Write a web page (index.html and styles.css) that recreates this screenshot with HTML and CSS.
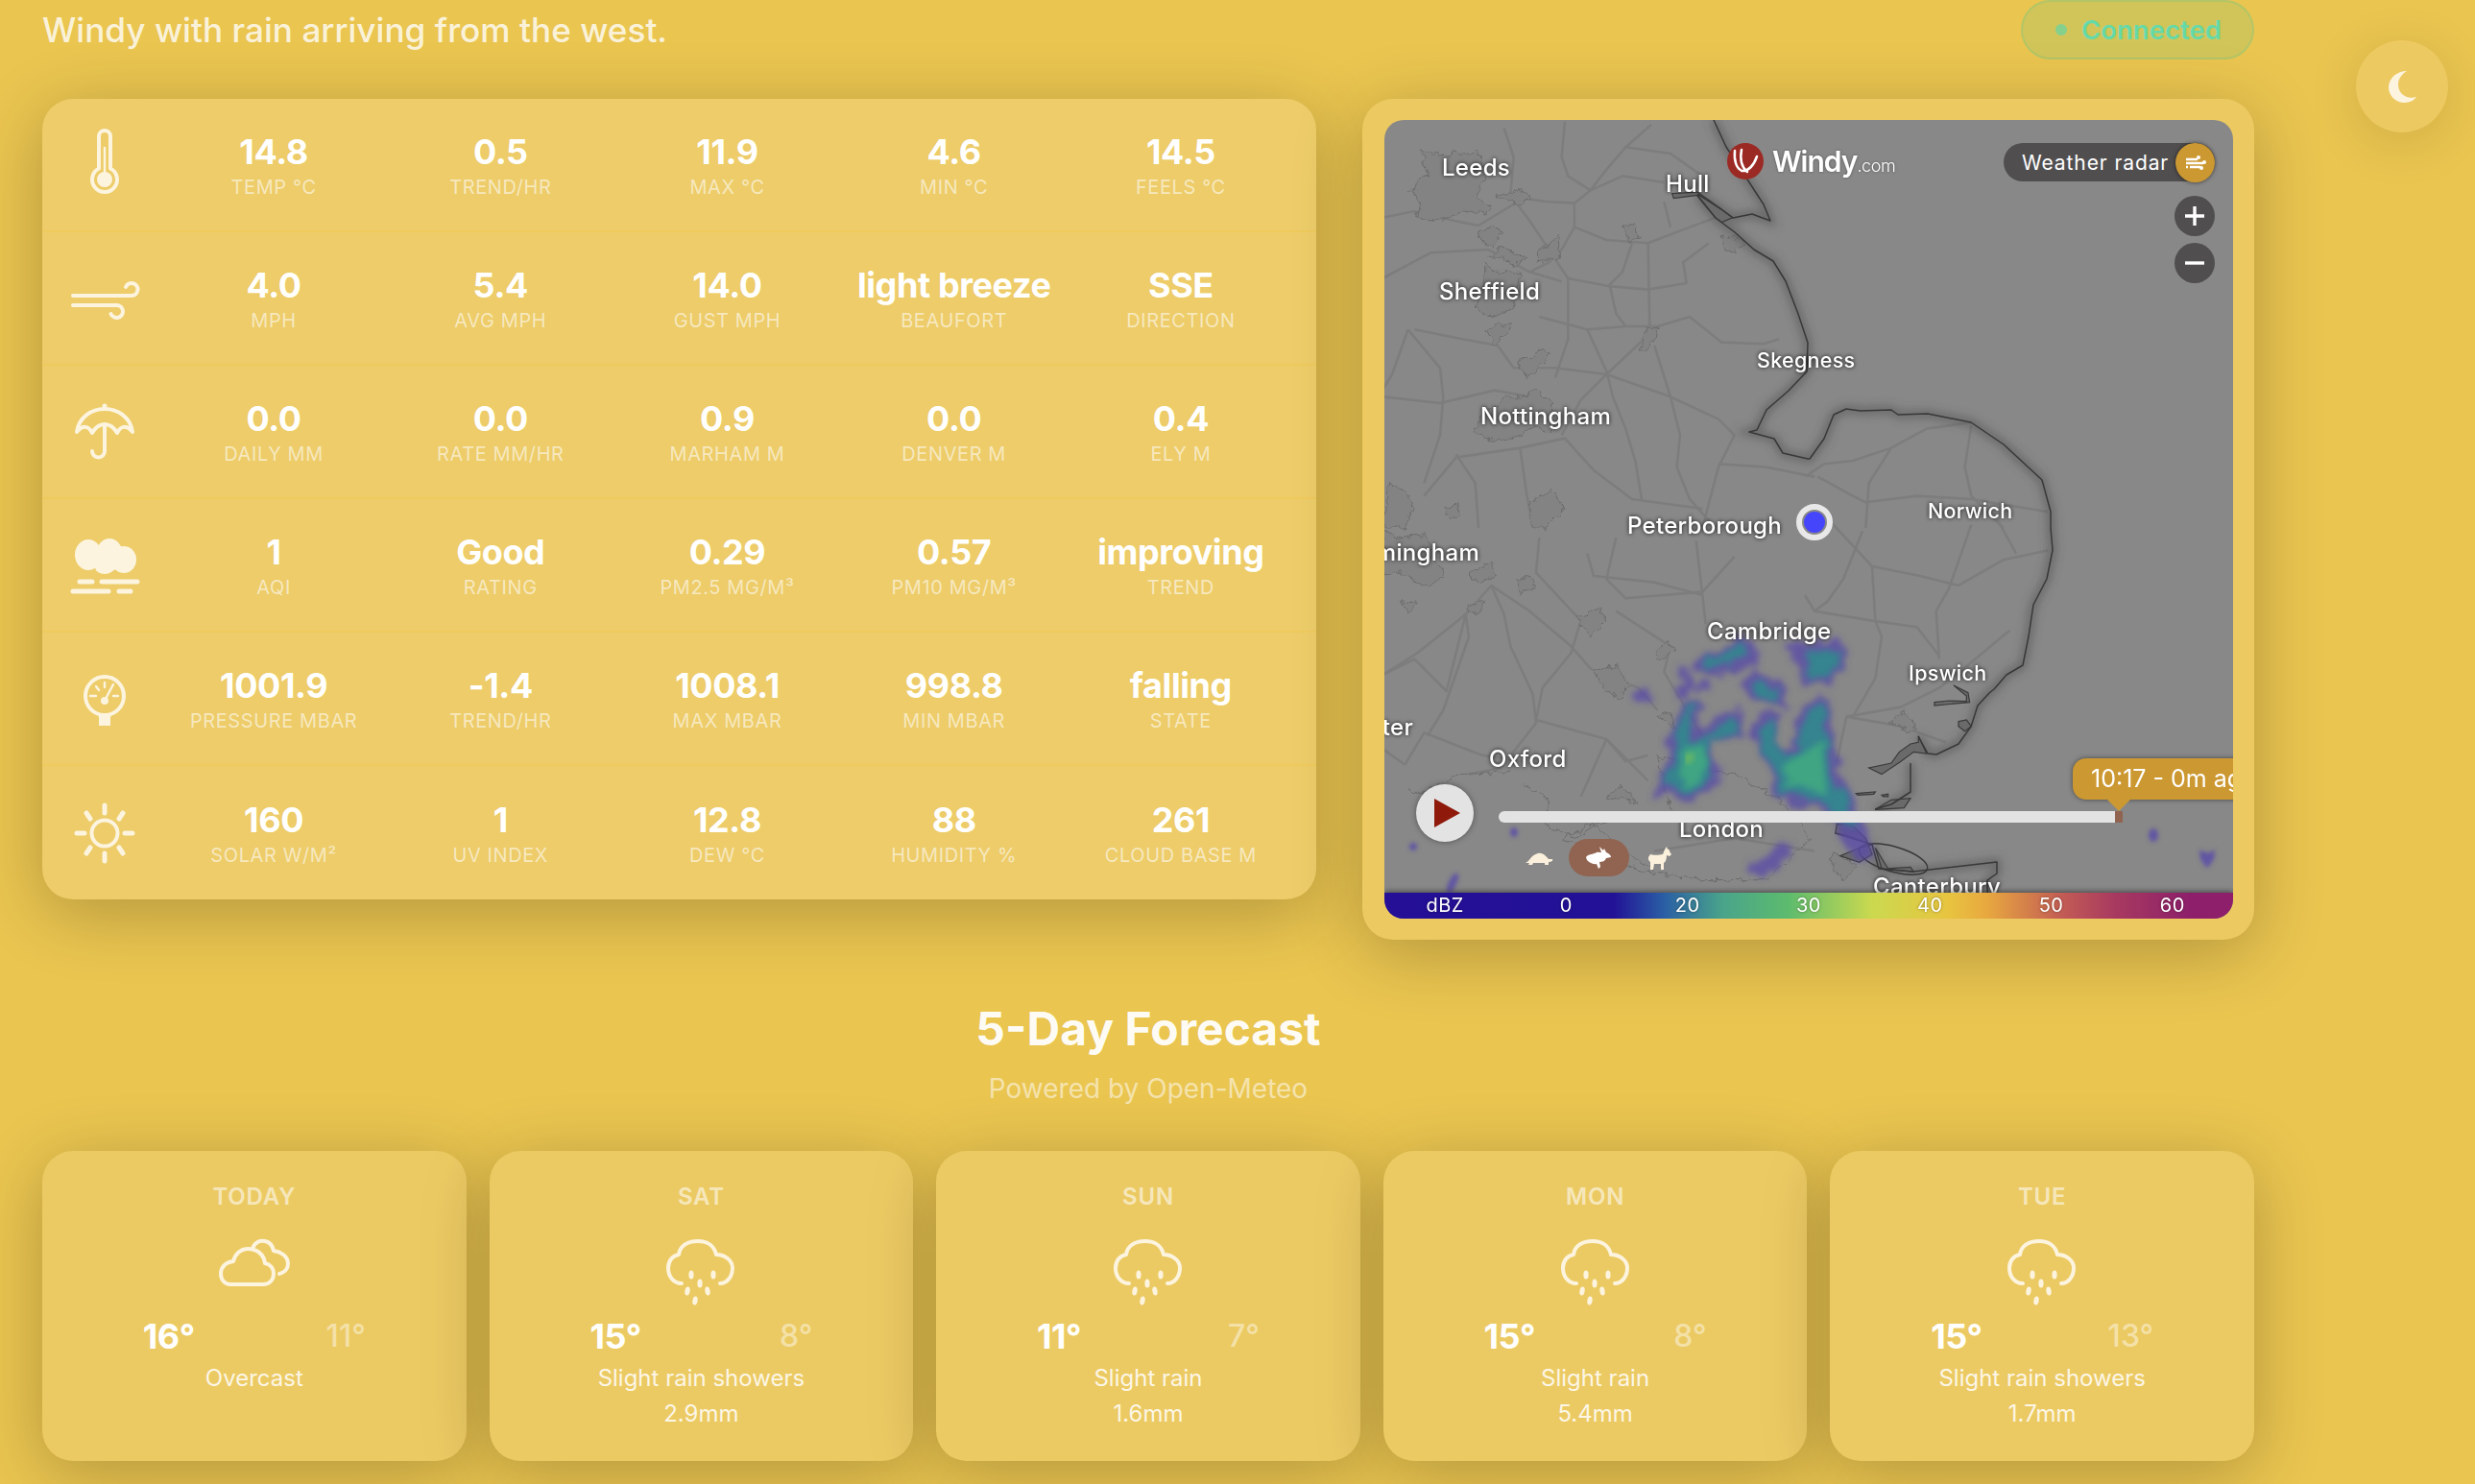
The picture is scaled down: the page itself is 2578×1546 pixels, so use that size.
FILE: index.html
```html
<!DOCTYPE html>
<html lang="en">
<head>
  <meta charset="UTF-8">
  <title>Weather Station</title>
  <link rel="stylesheet" href="styles.css">
</head>
<body>
  <button class="theme-toggle" title="Toggle theme">
    <svg width="34" height="35" viewBox="0 0 34 35"><path class="solid" d="M22 1C12 1 3 8 3 18C3 27 11 34 19 34C25 34 30 31 32 28C22 31 13 25 13 15C13 9 17 4 22 1Z"/></svg>
  </button>

  <div class="page">
    <header class="top">
      <p class="summary">Windy with rain arriving from the west.</p>
      <div class="status"><span class="status-dot"></span>Connected</div>
    </header>

    <section class="main-grid">
      <div class="card stats">
        <div class="stat-row">
          <svg class="stat-icon" viewBox="0 0 80 80"><path class="line" d="M34 10a6 6 0 0 1 12 0V43.5a13 13 0 1 1-12 0Z"/><circle class="solid" cx="40" cy="55" r="8"/><path class="line thin" d="M40 22V50"/></svg>
          <div class="stat"><b>14.8</b><span>Temp °C</span></div>
          <div class="stat"><b>0.5</b><span>Trend/hr</span></div>
          <div class="stat"><b>11.9</b><span>Max °C</span></div>
          <div class="stat"><b>4.6</b><span>Min °C</span></div>
          <div class="stat"><b>14.5</b><span>Feels °C</span></div>
        </div>
        <div class="stat-row">
          <svg class="stat-icon" viewBox="0 0 80 80"><path class="line" d="M7 37H68a6.5 6.5 0 1 0-6-9"/><path class="line" d="M7 47H53a6.5 6.5 0 1 1-6.5 9"/></svg>
          <div class="stat"><b>4.0</b><span>mph</span></div>
          <div class="stat"><b>5.4</b><span>Avg mph</span></div>
          <div class="stat"><b>14.0</b><span>Gust mph</span></div>
          <div class="stat"><b>light breeze</b><span>Beaufort</span></div>
          <div class="stat"><b>SSE</b><span>Direction</span></div>
        </div>
        <div class="stat-row">
          <svg class="stat-icon" viewBox="0 0 80 80"><circle class="solid" cx="40" cy="13" r="2.5"/><path class="line" d="M11 40C13 25 26 16 40 16C54 16 67 25 69 40C63 33 57 33 53 41C49 34 45 32 40 32C35 32 31 34 27 41C23 33 17 33 11 40Z"/><path class="line" d="M40 32V60a6.5 6.5 0 0 1-13 0"/></svg>
          <div class="stat"><b>0.0</b><span>Daily mm</span></div>
          <div class="stat"><b>0.0</b><span>Rate mm/hr</span></div>
          <div class="stat"><b>0.9</b><span>Marham m</span></div>
          <div class="stat"><b>0.0</b><span>Denver m</span></div>
          <div class="stat"><b>0.4</b><span>Ely m</span></div>
        </div>
        <div class="stat-row">
          <svg class="stat-icon" viewBox="0 0 80 80"><g class="solid"><ellipse cx="23" cy="29" rx="14" ry="16"/><ellipse cx="45" cy="29" rx="14" ry="17"/><ellipse cx="60" cy="34" rx="13" ry="14"/><ellipse cx="40" cy="42" rx="10" ry="7"/></g><path class="line wide" d="M14 57H27M37 57H74M7 67H44M55 67H67"/></svg>
          <div class="stat"><b>1</b><span>AQI</span></div>
          <div class="stat"><b>Good</b><span>Rating</span></div>
          <div class="stat"><b>0.29</b><span>PM2.5 mg/m³</span></div>
          <div class="stat"><b>0.57</b><span>PM10 mg/m³</span></div>
          <div class="stat"><b>improving</b><span>Trend</span></div>
        </div>
        <div class="stat-row">
          <svg class="stat-icon" viewBox="0 0 80 80"><circle class="line" cx="40" cy="37" r="20"/><path class="solid" d="M33 55H47L46 60V68H34V60Z"/><circle class="solid" cx="40" cy="42" r="4"/><path class="line thin" d="M40 42L49 25M40 23V28M31 27L34 31M25 37H31M49 37H54"/></svg>
          <div class="stat"><b>1001.9</b><span>Pressure mbar</span></div>
          <div class="stat"><b>-1.4</b><span>Trend/hr</span></div>
          <div class="stat"><b>1008.1</b><span>Max mbar</span></div>
          <div class="stat"><b>998.8</b><span>Min mbar</span></div>
          <div class="stat"><b>falling</b><span>State</span></div>
        </div>
        <div class="stat-row">
          <svg class="stat-icon" viewBox="0 0 80 80"><circle class="line" cx="40" cy="40" r="13.5"/><path class="line wide" d="M40 11V19M40 61V69M11 40H19M61 40H69M21 19L25 25M59 19L55 25M21 61L25 55M59 61L55 55"/></svg>
          <div class="stat"><b>160</b><span>Solar W/m²</span></div>
          <div class="stat"><b>1</b><span>UV Index</span></div>
          <div class="stat"><b>12.8</b><span>Dew °C</span></div>
          <div class="stat"><b>88</b><span>Humidity %</span></div>
          <div class="stat"><b>261</b><span>Cloud Base m</span></div>
        </div>
      </div>

      <div class="card map-card">
        <div class="map">
          <svg class="map-art" viewBox="1442 125 884 832" width="884" height="832">
            <defs>
              <filter id="soft" x="-20%" y="-20%" width="140%" height="140%"><feGaussianBlur stdDeviation="5"/></filter>
              <filter id="jag" x="-5%" y="-5%" width="110%" height="110%">
                <feTurbulence type="fractalNoise" baseFrequency=".035" numOctaves="3" seed="4"/>
                <feDisplacementMap in="SourceGraphic" scale="30" xChannelSelector="R" yChannelSelector="G"/>
              </filter>
              <filter id="rainy" x="-10%" y="-10%" width="120%" height="120%">
                <feTurbulence type="fractalNoise" baseFrequency=".06" numOctaves="3" seed="7"/>
                <feDisplacementMap in="SourceGraphic" scale="20" xChannelSelector="R" yChannelSelector="G"/>
                <feGaussianBlur stdDeviation="3"/>
              </filter>
            </defs>

            <!-- roads -->
            <g class="roads" transform="translate(1440 120) scale(.3333)">
              <path d="M0 320 100 300 200 325 300 345 440 260 510 270 600 275 650 235 750 190 880 210"/>
              <path d="M760 100 700 170 650 235M760 100 840 30M760 100 900 120 1000 190"/>
              <path d="M570 20 560 130 580 190 650 235M380 40 410 130 400 250 460 330 520 420 580 510 580 700 540 820"/>
              <path d="M600 280 600 350 560 420 520 460 460 490M600 350 700 390 830 400 960 350 1040 320"/>
              <path d="M830 400 835 660M780 400 750 490 710 530 730 620 760 660"/>
              <path d="M580 510 710 535 830 545 950 525 940 460 1020 400"/>
              <path d="M490 630 640 670 760 660 860 660 960 630 1060 710 1190 715 1240 700"/>
              <path d="M860 660 700 810 620 890 560 1000M640 670 700 800 720 880 760 980 790 1080 810 1200"/>
              <path d="M700 810 900 880 1050 950 1100 1000 1050 1100 1000 1290"/>
              <path d="M100 670 250 700 360 720 410 790 540 790 700 810M80 670 30 810 0 860M80 670 180 790 190 880 180 1000 130 1150"/>
              <path d="M0 880 180 900 350 860 460 880M430 1040 570 1010 660 1110 780 1200 1000 1230"/>
              <path d="M230 1060 290 1150 300 1290M430 1040 230 1070 130 1190M430 1040 450 1180 470 1290"/>
              <path d="M900 880 930 1000 920 1100 960 1200 1040 1290M1050 1090 1200 1100 1350 1130M850 720 900 880"/>
              <path d="M900 350 880 270M0 510 150 430 330 420 460 490 560 520"/>
            </g>
            <g class="roads" transform="translate(1880 120) scale(.3333)">
              <path d="M0 1130 60 1090 150 1080 270 1040 380 980 520 960M270 1040 200 1150 190 1290"/>
              <path d="M40 1130 150 1190 190 1210 350 1190 520 1200 760 1240M520 970 500 1100 520 1190 620 1290"/>
            </g>
            <g class="roads" transform="translate(1880 540) scale(.3333)">
              <path d="M0 240 30 290 210 320 350 340 420 430M210 150 220 320 240 370 220 500 150 620"/>
              <path d="M80 10 210 150 360 180 480 210 620 130 760 100M520 20 450 220 410 290 420 440"/>
              <path d="M180 40 120 190 70 260 30 290M640 350 520 450 420 530 300 590 130 620 100 760"/>
              <path d="M130 620 300 650 440 700M600 0 660 110"/>
            </g>
            <g class="roads" transform="translate(1440 540) scale(.3333)">
              <path d="M0 490 100 440 200 540 260 300 340 210 460 290 590 400 650 470 800 530 860 600"/>
              <path d="M490 60 480 170 620 320 590 420 500 530 480 630 700 690 760 760 830 740"/>
              <path d="M340 210 380 300 400 400 470 550 480 640 370 780 270 800M260 300 110 420 0 490"/>
              <path d="M730 60 700 190 760 250 1000 230 1100 120M640 110 660 180 850 200 1000 240M1000 240 980 70M1000 240 1010 330"/>
              <path d="M70 770 130 670 310 740 440 760M70 770 0 720M260 300 270 370 190 600 140 680"/>
              <path d="M700 690 620 870M700 690 830 820M850 1040 1100 1000 1350 1040M730 290 900 400 880 480 1000 680"/>
            </g>

            <!-- towns -->
            <g class="towns" filter="url(#jag)" transform="translate(1440 120) scale(.3333)">
              <path d="M125 105 150 120 170 115 200 130 230 110 265 125 300 110 315 160 330 200 300 220 300 260 340 290 320 310 265 295 210 320 150 330 110 320 120 270 85 240 110 200 150 190 130 150Z"/>
              <path d="M350 250 390 245 430 230 465 255 430 280 380 270Z"/>
              <path d="M295 370 340 345 375 360 350 415 300 390ZM335 440 370 415 410 430 445 440 420 470 370 445ZM485 420 520 400 550 370 560 440 530 450 485 460Z"/>
              <path d="M320 465 350 490 380 490 430 490 410 600 370 620 340 630 290 600 320 520Z"/>
              <path d="M330 670 365 655 405 650 370 700 350 720ZM425 770 490 735 530 745 490 790 450 825Z"/>
              <path d="M755 345 785 345 800 390 770 400ZM800 735 825 670 865 670 830 735Z"/>
              <path d="M390 880 430 885 480 855 530 900 530 990 480 975 420 1005 355 1020 285 990 310 940Z"/>
              <path d="M1060 375 1100 385 1130 400 1100 430 1070 420Z"/>
              <path d="M460 1210 530 1170 570 1230 510 1290 470 1290ZM190 1230 230 1215 245 1250 215 1265ZM20 1150 60 1170 100 1220 70 1290 0 1290 10 1200Z"/>
            </g>
            <g class="towns" filter="url(#jag)" transform="translate(1440 540) scale(.3333)">
              <path d="M270 170 340 130 355 180 300 205ZM0 40 60 60 130 50 190 180 130 220 60 170 0 180Z"/>
              <path d="M55 260 115 265 85 295ZM260 280 320 255 300 300ZM420 195 460 180 475 215 430 235ZM610 310 680 280 700 320 650 370Z"/>
              <path d="M660 480 730 455 770 520 740 565 690 530ZM855 430 885 385 915 405 880 440ZM850 620 905 600 915 660 880 630ZM700 870 750 830 795 890 750 880Z"/>
              <path class="open" d="M860 740 1100 800 1240 880 1340 1000 1200 1130 1000 1130 800 1100 560 1000 650 960 900 920Z"/>
              <path class="open" d="M75 845 120 860 240 800 340 795 400 790M440 830 520 870 510 960 600 1000 660 960 760 1040 850 1100"/>
            </g>
            <g class="towns" filter="url(#jag)" transform="translate(1880 540) scale(.3333)">
              <path d="M265 635 310 600 345 640 345 665 300 655ZM70 1060 100 1050 160 1090 120 1130Z"/>
            </g>

            <!-- coast -->
            <g class="coast-glow" filter="url(#soft)">
              <path d="M1785 125 1798 153 1837 213 1844 230 1825 223 1805 227 1793 218 1768 202M1768 204 1787 227 1807 242 1827 260 1847 272 1860 293 1873 327 1883 357 1882 387 1863 407 1840 427 1830 448 1822 450 1848 457 1857 472 1883 478 1885 478 1900 457 1910 432 1923 426 1938 428 1970 427 1977 432 2008 431 2053 440 2087 463 2127 500 2136 533 2136 550 2138 573 2132 603 2118 630 2113 663 2107 693 2090 703 2077 718 2072 722 2060 735 2053 757 2040 775 2017 786 2008 785 1998 767M1990 795 1990 825 1970 838 1953 843M1950 880 1957 905 1993 908 2080 898 2080 910 2070 917 2070 930"/>
            </g>
            <g class="estuary" transform="translate(1440 120) scale(.3333)">
              <path d="M905 245 985 240 1060 295 1095 320 1060 335 1040 320 985 250 910 260Z"/>
            </g>
            <g class="estuary" transform="translate(1880 540) scale(.3333)">
              <path d="M465 522 510 545 515 575 405 585 405 575 450 570 505 572 505 555Z"/>
              <path d="M480 635 505 630 520 650 500 665 480 650Z"/>
              <path d="M355 680 380 735 340 730 300 760 240 800 200 780 270 765 295 730 330 705 355 700Z"/>
              <path d="M220 910 270 880 330 875 310 905ZM160 860 220 855 215 862 165 865ZM240 865 260 862 260 870 245 870Z"/>
              <path d="M100 955 150 960 190 1000 210 1050 170 1075 110 1055 170 1030 210 1020 130 990 95 985Z"/>
              <path d="M220 1030 240 1095 340 1105 330 1090 260 1095Z"/>
            </g>
            <path class="coast-line" d="M1785 125 1798 153 1837 213 1844 230 1825 223 1805 227 1793 218 1768 202M1768 204 1787 227 1807 242 1827 260 1847 272 1860 293 1873 327 1883 357 1882 387 1863 407 1840 427 1830 448 1822 450 1848 457 1857 472 1883 478 1885 478 1900 457 1910 432 1923 426 1938 428 1970 427 1977 432 2008 431 2053 440 2087 463 2127 500 2136 533 2136 550 2138 573 2132 603 2118 630 2113 663 2107 693 2090 703 2077 718 2072 722 2060 735 2053 757 2040 775 2017 786 2008 785 1998 767M1990 795 1990 825 1970 838 1953 843M1912 868 1950 880 1957 905 1993 908 2080 898 2080 910 2070 917 2070 930"/>
            <ellipse class="coast-line" cx="1972" cy="895" rx="37" ry="13" transform="rotate(16 1972 895)"/>

            <!-- radar -->
            <g class="rain-outer" filter="url(#rainy)">
              <path d="M1765 695 1810 668 1820 672 1832 690 1815 693 1780 697Z"/>
              <path d="M1747 753 1767 730 1770 740 1757 753 1773 767 1790 750 1810 743 1812 767 1783 763 1773 783 1787 803 1783 817 1760 830 1747 827 1727 823 1733 810 1740 800 1743 770Z"/>
              <path d="M1863 673 1883 680 1903 670 1917 670 1920 693 1903 707 1880 710 1883 697 1870 680Z"/>
              <path d="M1818 712 1827 705 1853 717 1857 733 1837 725 1820 717Z"/>
              <path d="M1827 763 1840 747 1850 748 1843 770 1852 788 1873 780 1877 743 1900 728 1905 780 1913 807 1923 827 1935 860 1943 877 1950 893 1937 893 1920 873 1913 850 1900 840 1880 833 1867 833 1853 823 1847 803 1837 777Z"/>
              <path d="M1857 877 1845 897 1828 902 1826 908 1848 902 1862 881Z"/>
              <ellipse cx="1773" cy="713" rx="3" ry="2"/><ellipse cx="1755" cy="717" rx="3" ry="5"/><ellipse cx="1753" cy="703" rx="2" ry="3"/>
              <ellipse cx="1789" cy="703" rx="2" ry="2"/><ellipse cx="1712" cy="724" rx="4" ry="2"/>
            </g>
            <g class="rain-dots" filter="url(#soft-dot)">
              <ellipse cx="1577" cy="867" rx="3" ry="4"/>
              <ellipse cx="1513" cy="920" rx="3" ry="10" transform="rotate(25 1513 920)"/><ellipse cx="1472" cy="882" rx="3" ry="3"/>
              <ellipse cx="2243" cy="870" rx="4" ry="6"/><path d="M2292 887 2300 890 2306 887 2305 895 2299 903 2293 895Z"/>
            </g>
            <g class="rain-mid" filter="url(#rainy)">
              <path d="M1780 690 1810 673 1815 680 1800 690Z"/>
              <path d="M1750 757 1765 737 1752 770 1773 775 1790 758 1806 750 1806 762 1780 768 1772 790 1782 808 1760 825 1750 820 1735 816 1745 800Z"/>
              <path d="M1885 685 1905 677 1914 680 1913 692 1900 700 1887 702Z"/>
              <path d="M1830 712 1850 722 1850 727 1835 720Z"/>
              <path d="M1835 770 1845 752 1847 775 1857 795 1876 787 1883 748 1897 735 1900 782 1908 810 1918 830 1928 860 1915 845 1900 835 1880 828 1860 825 1850 800Z"/>
            </g>
            <g class="rain-core" filter="url(#rainy)">
              <path d="M1757 775 1770 780 1778 805 1762 820 1750 810Z"/>
              <path d="M1860 800 1880 785 1896 775 1900 810 1905 825 1880 820 1865 820Z"/>
            </g>
            <g class="rain-peak" filter="url(#rainy)">
              <ellipse cx="1761" cy="790" rx="5" ry="6"/>
            </g>

            <!-- city labels -->
            <g class="labels">
              <text x="1502" y="183">Leeds</text>
              <text x="1735" y="200">Hull</text>
              <text x="1499" y="312">Sheffield</text>
              <text class="label-sm" x="1830" y="383">Skegness</text>
              <text x="1542" y="442">Nottingham</text>
              <text class="label-sm" x="2008" y="540">Norwich</text>
              <text x="1695" y="556">Peterborough</text>
              <text x="1541" y="584" text-anchor="end">Birmingham</text>
              <text x="1778" y="666">Cambridge</text>
              <text class="label-sm" x="1988" y="709">Ipswich</text>
              <text x="1472" y="766" text-anchor="end">Worcester</text>
              <text x="1551" y="799">Oxford</text>
              <text x="1749" y="872">London</text>
              <text x="1951" y="932">Canterbury</text>
            </g>

            <circle class="marker-ring" cx="1890" cy="544" r="16"/>
            <circle class="marker-dot" cx="1890" cy="544" r="11"/>
          </svg>

          <div class="windy-logo">
            <svg width="40" height="40" viewBox="0 0 40 40"><circle class="logo-disc" cx="20" cy="20" r="19"/><path class="logo-wave" d="M9 9C8 20 11 27 15 29M16 8C14 19 17 27 22 31M16 30C23 31 29 24 32 15"/></svg>
            <span class="windy-name">Windy<small>.com</small></span>
          </div>

          <div class="layer-pill">
            <span>Weather radar</span>
            <span class="layer-icon">
              <svg width="24" height="20" viewBox="0 0 24 20"><path d="M2 7H14M2 11H20M6 15H17M2 15H4"/><circle cx="15" cy="5" r="2"/><circle cx="21" cy="10" r="2"/><circle cx="18" cy="16" r="2"/></svg>
            </span>
          </div>

          <div class="zoom-btns">
            <button class="zoom-btn">
              <svg width="24" height="24" viewBox="0 0 24 24"><path d="M12 2V22M2 12H22"/></svg>
            </button>
            <button class="zoom-btn">
              <svg width="24" height="24" viewBox="0 0 24 24"><path d="M2 12H22"/></svg>
            </button>
          </div>

          <button class="play">
            <svg width="30" height="32" viewBox="0 0 30 32"><path d="M1 1L28 16L1 31Z"/></svg>
          </button>
          <div class="timeline"><span class="timeline-head"></span></div>
          <div class="time-tip">10:17 - 0m ago</div>

          <div class="speeds">
            <svg class="speed-slow" width="30" height="16" viewBox="0 0 30 16"><path d="M1 13C5 12 6 5 14 3C20 2 23 7 25 9L29 9C30 11 28 12 25 12L25 15L21 15L21 13L9 13L8 15L4 15L5 13Z"/></svg>
            <span class="speed-on">
              <svg width="30" height="26" viewBox="0 0 30 26"><path d="M1 12C3 9 7 9 10 8C13 6 15 7 17 7L15 1L19 5L20 3L22 7C25 8 27 10 27 12L22 13C21 16 18 17 15 17L16 22L14 24L12 19C8 20 4 17 2 15Z"/></svg>
            </span>
            <svg class="speed-fast" width="26" height="26" viewBox="0 0 26 26"><path d="M2 12L4 9C6 10 13 10 17 9L19 4L21 1L22 4C23 3 24 4 24 6L26 9L24 11L21 10C21 14 20 17 18 18L18 25L15 25L15 19L8 19L7 25L4 25L4 17C2 16 2 14 2 12Z"/></svg>
          </div>

          <div class="legend">
            <span>dBZ</span><span>0</span><span>20</span><span>30</span><span>40</span><span>50</span><span>60</span>
          </div>
        </div>
      </div>
    </section>

    <section class="forecast">
      <h2>5-Day Forecast</h2>
      <p class="powered">Powered by Open-Meteo</p>
      <div class="days">
        <div class="card day">
          <div class="day-name">Today</div>
          <div class="day-icon">
            <svg width="80" height="60" viewBox="0 0 80 60"><path class="line" d="M15 51H49C56 51 60 46 60 40C60 34 56 30 51 29C50 20 43 14 33 14C26 14 20 19 18 27C10 28 5 33 5 40C5 46 9 51 15 51Z"/><path class="line" d="M38 14C40 7 46 5 51 6C56 7 59 11 60 16C67 17 75 21 75 30C75 35 71 39 66 40"/></svg>
          </div>
          <div class="temps"><b>16°</b><span>11°</span></div>
          <div class="desc">Overcast</div>
        </div>
        <div class="card day">
          <div class="day-name">Sat</div>
          <div class="day-icon"><svg width="80" height="76" viewBox="0 0 80 76"><use href="#rain-cloud"/></svg></div>
          <div class="temps"><b>15°</b><span>8°</span></div>
          <div class="desc">Slight rain showers</div>
          <div class="desc precip">2.9mm</div>
        </div>
        <div class="card day">
          <div class="day-name">Sun</div>
          <div class="day-icon"><svg width="80" height="76" viewBox="0 0 80 76"><use href="#rain-cloud"/></svg></div>
          <div class="temps"><b>11°</b><span>7°</span></div>
          <div class="desc">Slight rain</div>
          <div class="desc precip">1.6mm</div>
        </div>
        <div class="card day">
          <div class="day-name">Mon</div>
          <div class="day-icon"><svg width="80" height="76" viewBox="0 0 80 76"><use href="#rain-cloud"/></svg></div>
          <div class="temps"><b>15°</b><span>8°</span></div>
          <div class="desc">Slight rain</div>
          <div class="desc precip">5.4mm</div>
        </div>
        <div class="card day">
          <div class="day-name">Tue</div>
          <div class="day-icon"><svg width="80" height="76" viewBox="0 0 80 76"><use href="#rain-cloud"/></svg></div>
          <div class="temps"><b>15°</b><span>13°</span></div>
          <div class="desc">Slight rain showers</div>
          <div class="desc precip">1.7mm</div>
        </div>
      </div>
    </section>
  </div>

  <svg class="defs-only" width="0" height="0">
    <defs>
      <filter id="soft-dot" x="-50%" y="-50%" width="200%" height="200%"><feGaussianBlur stdDeviation="2"/></filter>
      <g id="rain-cloud">
        <path class="line" d="M20 50C11 50 6 42 6 34C6 26 11 21 17 20C18 11 26 6 37 6C47 6 54 11 56 20C65 20 73 26 73 34C73 42 68 50 60 50"/>
        <g class="solid">
          <ellipse cx="30" cy="41" rx="2.6" ry="4.5"/><ellipse cx="53" cy="41" rx="2.6" ry="4.5"/><ellipse cx="39" cy="50" rx="2.6" ry="4.5"/>
          <ellipse cx="26" cy="58" rx="2.6" ry="4.5" transform="rotate(10 26 58)"/><ellipse cx="47" cy="58" rx="2.6" ry="4.5" transform="rotate(-10 47 58)"/><ellipse cx="34" cy="68" rx="2.6" ry="4.5" transform="rotate(10 34 68)"/>
        </g>
      </g>
    </defs>
  </svg>
</body>
</html>
```

FILE: styles.css
```css
* {
  box-sizing: border-box;
}
body {
  margin: 0;
  min-height: 1546px;
  font-family: Inter, "Liberation Sans", sans-serif;
  background: #eac550;
  color: #fff;
  overflow: hidden;
}
p, h2 {
  margin: 0;
}
button {
  border: none;
  padding: 0;
  font: inherit;
  cursor: pointer;
}
.defs-only {
  position: absolute;
}

/* shared icon strokes */
.line {
  fill: none;
  stroke: #fcf4df;
  stroke-width: 4;
  stroke-linecap: round;
  stroke-linejoin: round;
}
.line.thin {
  stroke-width: 2.5;
}
.line.wide {
  stroke-width: 5;
}
.solid {
  fill: #fcf4df;
}

.page {
  width: 2304px;
  margin-left: 44px;
}
.top {
  display: flex;
  justify-content: space-between;
  align-items: center;
  height: 62px;
  margin-bottom: 41px;
}
.summary {
  font-size: 35.2px;
  font-weight: 500;
  color: rgba(255, 255, 255, 0.8);
}
.status {
  display: flex;
  align-items: center;
  gap: 15px;
  width: 243px;
  height: 62px;
  padding-left: 34px;
  font-size: 27.5px;
  font-weight: 600;
  color: #66d9a8;
  background: rgba(110, 200, 130, 0.2);
  border: 2px solid rgba(110, 200, 130, 0.3);
  border-radius: 31px;
}
.status-dot {
  width: 12px;
  height: 12px;
  border-radius: 50%;
  background: #86d08e;
}
.theme-toggle {
  position: absolute;
  left: 2454px;
  top: 42px;
  width: 96px;
  height: 96px;
  display: flex;
  align-items: center;
  justify-content: center;
  border-radius: 50%;
  background: #edc961;
  box-shadow: 0 10px 56px rgba(0, 0, 0, 0.12);
}

.card {
  background: #edcc69;
  border-radius: 32px;
  box-shadow: 0 14px 72px rgba(0, 0, 0, 0.24);
}
.main-grid {
  display: grid;
  grid-template-columns: 1327px 929px;
  justify-content: space-between;
  align-items: start;
}

/* readings table */
.stats {
  overflow: hidden;
}
.stat-row {
  display: grid;
  grid-template-columns: 98px repeat(5, 1fr);
  align-items: center;
  height: 139px;
  padding: 0 23px 0 25px;
  border-bottom: 2px solid #efca5c;
}
.stat-row:last-child {
  border-bottom: none;
}
.stat-icon {
  width: 80px;
  height: 80px;
}
.stat {
  display: flex;
  flex-direction: column;
  align-items: center;
  white-space: nowrap;
}
.stat b {
  font-size: 36px;
  line-height: 44px;
  font-weight: 700;
  letter-spacing: -0.4px;
}
.stat span {
  margin-top: 3px;
  font-size: 20px;
  line-height: 24px;
  text-transform: uppercase;
  letter-spacing: 0.6px;
  color: rgba(255, 255, 255, 0.58);
}

/* radar map */
.map-card {
  padding: 22px 22px 22px 23px;
  height: 876px;
  background: #ecc961;
}
.map {
  position: relative;
  width: 884px;
  height: 832px;
  background: #888;
  border-radius: 20px;
  overflow: hidden;
}
.map-art {
  display: block;
}
.roads path {
  fill: none;
  stroke: #7d7d7d;
  stroke-width: 2.6;
  stroke-linejoin: round;
  vector-effect: non-scaling-stroke;
}
.roads {
  filter: blur(0.6px);
}
.towns path {
  fill: #838383;
  stroke: #6c6c6c;
  stroke-width: 1;
  vector-effect: non-scaling-stroke;
}
.towns path.open {
  fill: none;
}
.coast-glow path {
  fill: none;
  stroke: #4a4a4a;
  stroke-width: 8;
  opacity: 0.55;
}
.estuary path {
  fill: #6a6a6a;
  stroke: #3a3a3a;
  stroke-width: 1.2;
  vector-effect: non-scaling-stroke;
}
.coast-line {
  fill: none;
  stroke: #383838;
  stroke-width: 1.5;
  stroke-linejoin: round;
}
.rain-outer > * {
  fill: #5a4ea8;
  stroke: #5a4ea8;
  stroke-width: 9;
  stroke-linejoin: round;
  opacity: 0.8;
}
.rain-dots > * {
  fill: #5a4ea8;
  stroke: #5a4ea8;
  stroke-width: 2;
  opacity: 0.85;
}
.rain-mid path {
  fill: #35848f;
  stroke: #35848f;
  stroke-width: 7;
  stroke-linejoin: round;
}
.rain-core path {
  fill: #3fa582;
  stroke: #3fa582;
  stroke-width: 3;
}
.rain-peak ellipse {
  fill: #6fbb5c;
}
.labels text {
  font-size: 24px;
  font-weight: 500;
  letter-spacing: 0.3px;
  fill: #fff;
}
.labels text.label-sm {
  font-size: 21.5px;
}
.labels {
  filter: drop-shadow(0 0 2px rgba(0, 0, 0, 0.9));
}
.marker-ring {
  fill: none;
  stroke: #e8e8e8;
  stroke-width: 6;
}
.marker-dot {
  fill: #4545fb;
}

.windy-logo {
  position: absolute;
  left: 356px;
  top: 23px;
  display: flex;
  align-items: center;
  gap: 8px;
}
.logo-disc {
  fill: #9c2a24;
}
.logo-wave {
  fill: none;
  stroke: #fff;
  stroke-width: 2.5;
  stroke-linecap: round;
}
.windy-name {
  font-size: 30px;
  font-weight: 600;
  letter-spacing: -1px;
  white-space: nowrap;
  text-shadow: 0 0 3px rgba(0, 0, 0, 0.4);
}
.windy-name small {
  font-size: 18px;
  font-weight: 300;
  letter-spacing: -0.4px;
}
.layer-pill {
  position: absolute;
  right: 19px;
  top: 24px;
  display: flex;
  align-items: center;
  justify-content: space-between;
  width: 220px;
  height: 40px;
  padding-left: 19px;
  font-size: 21px;
  letter-spacing: 0.9px;
  white-space: nowrap;
  background: #504e4f;
  border-radius: 20px;
}
.layer-icon {
  display: flex;
  align-items: center;
  justify-content: center;
  flex: none;
  width: 41px;
  height: 41px;
  border-radius: 50%;
  background: #cc9832;
  box-shadow: 0 0 4px rgba(0, 0, 0, 0.6);
}
.layer-icon path {
  fill: none;
  stroke: #fff;
  stroke-width: 2.5;
}
.layer-icon circle {
  fill: #fff;
}
.zoom-btns {
  position: absolute;
  right: 19px;
  top: 79px;
  display: flex;
  flex-direction: column;
  gap: 7px;
}
.zoom-btn {
  display: flex;
  align-items: center;
  justify-content: center;
  width: 42px;
  height: 42px;
  border-radius: 50%;
  background: #504e4f;
}
.zoom-btn path {
  stroke: #fff;
  stroke-width: 3.4;
  fill: none;
}
.play {
  position: absolute;
  left: 33px;
  top: 692px;
  display: flex;
  align-items: center;
  justify-content: center;
  width: 60px;
  height: 60px;
  padding-left: 5px;
  border-radius: 50%;
  background: #e3e3e3;
  box-shadow: 0 0 6px rgba(0, 0, 0, 0.4);
}
.play path {
  fill: #8f1a0c;
}
.timeline {
  position: absolute;
  left: 119px;
  top: 720px;
  width: 650px;
  height: 12px;
  background: #e3e3e3;
  border-radius: 6px 0 0 6px;
}
.timeline-head {
  position: absolute;
  right: 0;
  top: 0;
  width: 8px;
  height: 12px;
  background: #916451;
}
.time-tip {
  position: absolute;
  left: 717px;
  top: 665px;
  width: 220px;
  height: 43px;
  padding-left: 19px;
  font-size: 25px;
  line-height: 43px;
  white-space: nowrap;
  background: #cc9832;
  border-radius: 14px;
  box-shadow: 0 0 5px rgba(0, 0, 0, 0.5);
}
.time-tip::after {
  content: "";
  position: absolute;
  left: 36px;
  top: 43px;
  border: 12px solid transparent;
  border-top-color: #cc9832;
  border-bottom: none;
}
.speeds {
  position: absolute;
  left: 146px;
  top: 749px;
  display: flex;
  align-items: center;
}
.speeds svg path {
  fill: #fbf0dc;
}
.speed-slow {
  margin-right: 16px;
}
.speed-on {
  display: flex;
  align-items: center;
  justify-content: center;
  width: 63px;
  height: 39px;
  border-radius: 20px;
  background: #916451;
}
.speed-on svg path {
  fill: #fff;
}
.speed-fast {
  margin-left: 18px;
}
.legend {
  position: absolute;
  left: 0;
  right: 0;
  bottom: 0;
  display: grid;
  grid-template-columns: repeat(7, 1fr);
  height: 27px;
  font-size: 20px;
  line-height: 27px;
  text-align: center;
  letter-spacing: 0.5px;
  text-shadow: 0 0 3px rgba(0, 0, 0, 0.4);
  box-shadow: 0 -2px 5px rgba(0, 0, 0, 0.4);
  background: linear-gradient(90deg, #240f96 0%, #221296 27%, #2a5fa5 33%, #4aa58a 40%, #5cbb6e 47.5%, #cbd94f 57.5%, #e8c440 66.5%, #e8a83f 71%, #c25b55 80%, #a83a60 86%, #8d1f6b 95%);
}

/* forecast */
.forecast {
  margin-top: 64px;
  text-align: center;
}
.forecast h2 {
  font-size: 48px;
  line-height: 58px;
  font-weight: 700;
  color: rgba(255, 255, 255, 0.95);
}
.powered {
  margin-top: 16px;
  font-size: 28px;
  line-height: 34px;
  color: rgba(255, 255, 255, 0.55);
}
.days {
  display: grid;
  grid-template-columns: repeat(5, 1fr);
  gap: 24px;
  margin-top: 48px;
}
.day {
  height: 323px;
  padding-top: 33px;
  background: #ecca63;
}
.day-name {
  font-size: 24px;
  line-height: 30px;
  font-weight: 600;
  letter-spacing: 0.8px;
  text-transform: uppercase;
  color: rgba(255, 255, 255, 0.58);
}
.day-icon {
  height: 76px;
  margin-top: 25px;
}
.temps {
  display: flex;
  justify-content: space-between;
  align-items: center;
  width: 232px;
  margin: 7px auto 0;
  line-height: 44px;
}
.temps b {
  font-size: 36px;
  font-weight: 700;
  letter-spacing: -0.5px;
}
.temps span {
  font-size: 32px;
  font-weight: 500;
  color: rgba(255, 255, 255, 0.45);
}
.desc {
  margin-top: 7px;
  font-size: 24px;
  line-height: 30px;
  color: rgba(255, 255, 255, 0.85);
}
.desc.precip {
  margin-top: 7px;
}
```
